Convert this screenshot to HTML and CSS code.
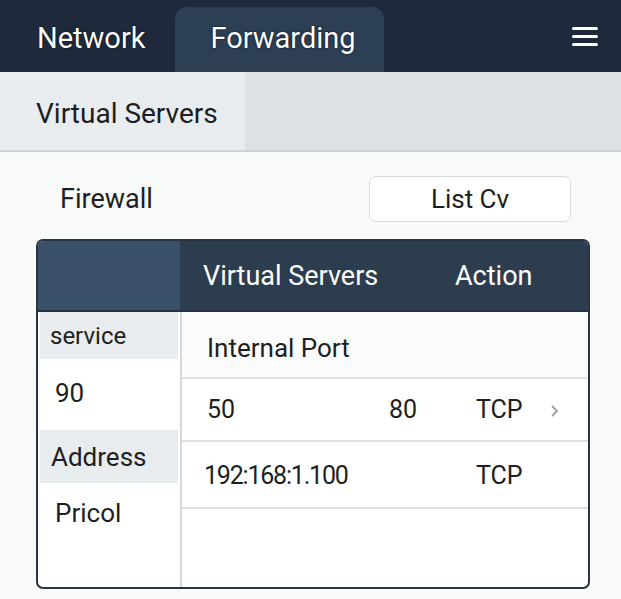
FILE: index.html
```html
<!DOCTYPE html>
<html lang="en">
<head>
    <meta charset="UTF-8">
    <meta name="viewport" content="width=device-width, initial-scale=1.0">
    <title>Virtual Servers</title>
    <link rel="stylesheet" href="styles.css">
</head>
<body>
    <!-- Top navigation -->
    <div class="topbar">
        <div class="tab">Network</div>
        <div class="tab active">Forwarding</div>
        <div class="menu">
            <svg width="28" height="24" viewBox="0 0 28 24">
                <rect x="1" y="2" width="26" height="3" rx="1.5" fill="#fff"/>
                <rect x="1" y="10" width="26" height="3" rx="1.5" fill="#fff"/>
                <rect x="1" y="18" width="26" height="3" rx="1.5" fill="#fff"/>
            </svg>
        </div>
    </div>

    <!-- Sub navigation -->
    <div class="subbar">
        <div class="subtab">Virtual Servers</div>
    </div>

    <div class="content">
        <div class="toolbar">
            <span class="title">Firewall</span>
            <button class="btn">List Cv</button>
        </div>

        <div class="table">
            <div class="thead">
                <div class="th-side"></div>
                <div class="th-main">
                    <span class="th-name">Virtual Servers</span>
                    <span class="th-action">Action</span>
                </div>
            </div>
            <div class="tbody">
                <div class="side">
                    <div class="side-label">service</div>
                    <div class="side-value v1">90</div>
                    <div class="side-label l2">Address</div>
                    <div class="side-value">Pricol</div>
                </div>
                <div class="main">
                    <div class="row r-head">Internal Port</div>
                    <div class="row r-data">
                        <span class="c1">50</span>
                        <span class="c2">80</span>
                        <span class="c3">TCP</span>
                        <span class="chev">
                            <svg width="10" height="14" viewBox="0 0 10 14">
                                <path d="M2.5 2.5 L7 7 L2.5 11.5" fill="none" stroke="#9a9ea3" stroke-width="1.8" stroke-linecap="round"/>
                            </svg>
                        </span>
                    </div>
                    <div class="row r-data r3">
                        <span class="c1 ip">192:168:1.100</span>
                        <span class="c2"></span>
                        <span class="c3">TCP</span>
                        <span class="chev"></span>
                    </div>
                </div>
            </div>
        </div>
    </div>
</body>
</html>
```

FILE: styles.css
```css
body {
    margin: 0;
    font-family: Roboto, 'Liberation Sans', sans-serif;
    background: #f8f9f9;
    color: #1d1f22;
    width: 621px;
    height: 599px;
    overflow: hidden;
}

.topbar {
    height: 72px;
    background: #1e2a3b;
    display: flex;
    align-items: flex-end;
    position: relative;
}

.tab {
    height: 65px;
    display: flex;
    align-items: center;
    padding: 0 30px 3px 37px;
    box-sizing: border-box;
    font-size: 29px;
    color: #fff;
    text-shadow: 0 0 2px #000;
}

.tab.active {
    background: #2d3f55;
    border-radius: 12px 12px 0 0;
    width: 209px;
    padding: 0 0 3px 35px;
}

.menu {
    margin-left: auto;
    margin-right: 22px;
    align-self: center;
    display: flex;
    padding-top: 2px;
}

.subbar {
    height: 78px;
    background: #dde1e4;
    border-bottom: 2px solid #cdd2d6;
    display: flex;
}

.subtab {
    width: 245px;
    background: #e9ecef;
    display: flex;
    align-items: center;
    padding: 4px 0 0 36px;
    box-sizing: border-box;
    font-size: 28px;
    color: #1b1d20;
}

.content {
    padding: 23px 31px 0 36px;
}

.toolbar {
    display: flex;
    align-items: center;
    justify-content: space-between;
    height: 47px;
    margin-bottom: 17px;
}

.title {
    font-size: 27px;
    padding-left: 24px;
}

.btn {
    width: 202px;
    height: 46px;
    background: #fff;
    border: 1px solid #d9dbdd;
    border-radius: 7px;
    font-family: inherit;
    font-size: 26px;
    color: #1d1f22;
    margin-right: 19px;
}

.table {
    width: 554px;
    height: 350px;
    box-sizing: border-box;
    border: 2px solid #2a333f;
    border-radius: 7px;
    overflow: hidden;
    background: #fff;
    display: flex;
    flex-direction: column;
}

.thead {
    height: 69px;
    display: flex;
    border-bottom: 2px solid #253142;
}

.th-side {
    width: 142px;
    background: #3a5068;
}

.th-main {
    flex: 1;
    background: #2c3d50;
    display: flex;
    align-items: center;
    color: #fff;
    font-size: 27px;
}

.th-name {
    padding-left: 23px;
    width: 252px;
}

.tbody {
    flex: 1;
    display: flex;
}

.side {
    width: 140px;
    padding-left: 2px;
    border-right: 2px solid #d5d8db;
    display: flex;
    flex-direction: column;
}

.side-label {
    background: #e9ecef;
    height: 47px;
    display: flex;
    align-items: center;
    padding-left: 10px;
    font-size: 24px;
    margin-right: 2px;
}

.side-label.l2 {
    height: 53px;
    padding-left: 11px;
    font-size: 26px;
}

.side-value {
    height: 60px;
    display: flex;
    align-items: center;
    padding-left: 15px;
    font-size: 26px;
}

.side-value.v1 {
    height: 71px;
    padding-bottom: 4px;
    box-sizing: border-box;
}

.main {
    flex: 1;
    display: flex;
    flex-direction: column;
}

.row {
    display: flex;
    align-items: center;
    padding-left: 25px;
    border-bottom: 2px solid #dfe2e5;
    font-size: 25px;
}

.r-head {
    height: 67px;
    background: #fbfbfb;
    font-size: 26px;
    padding: 6px 0 0 25px;
    box-sizing: border-box;
}

.r-data {
    height: 61px;
}

.r-data.r3 {
    height: 67px;
    padding-top: 2px;
    box-sizing: border-box;
}

.c1 {
    width: 182px;
}

.c1.ip {
    margin-left: -3px;
    width: 185px;
    letter-spacing: -1.2px;
}

.c2 {
    width: 87px;
}

.c3 {
    width: 74px;
}

.chev {
    display: flex;
    align-items: center;
    padding-top: 2px;
}
```
